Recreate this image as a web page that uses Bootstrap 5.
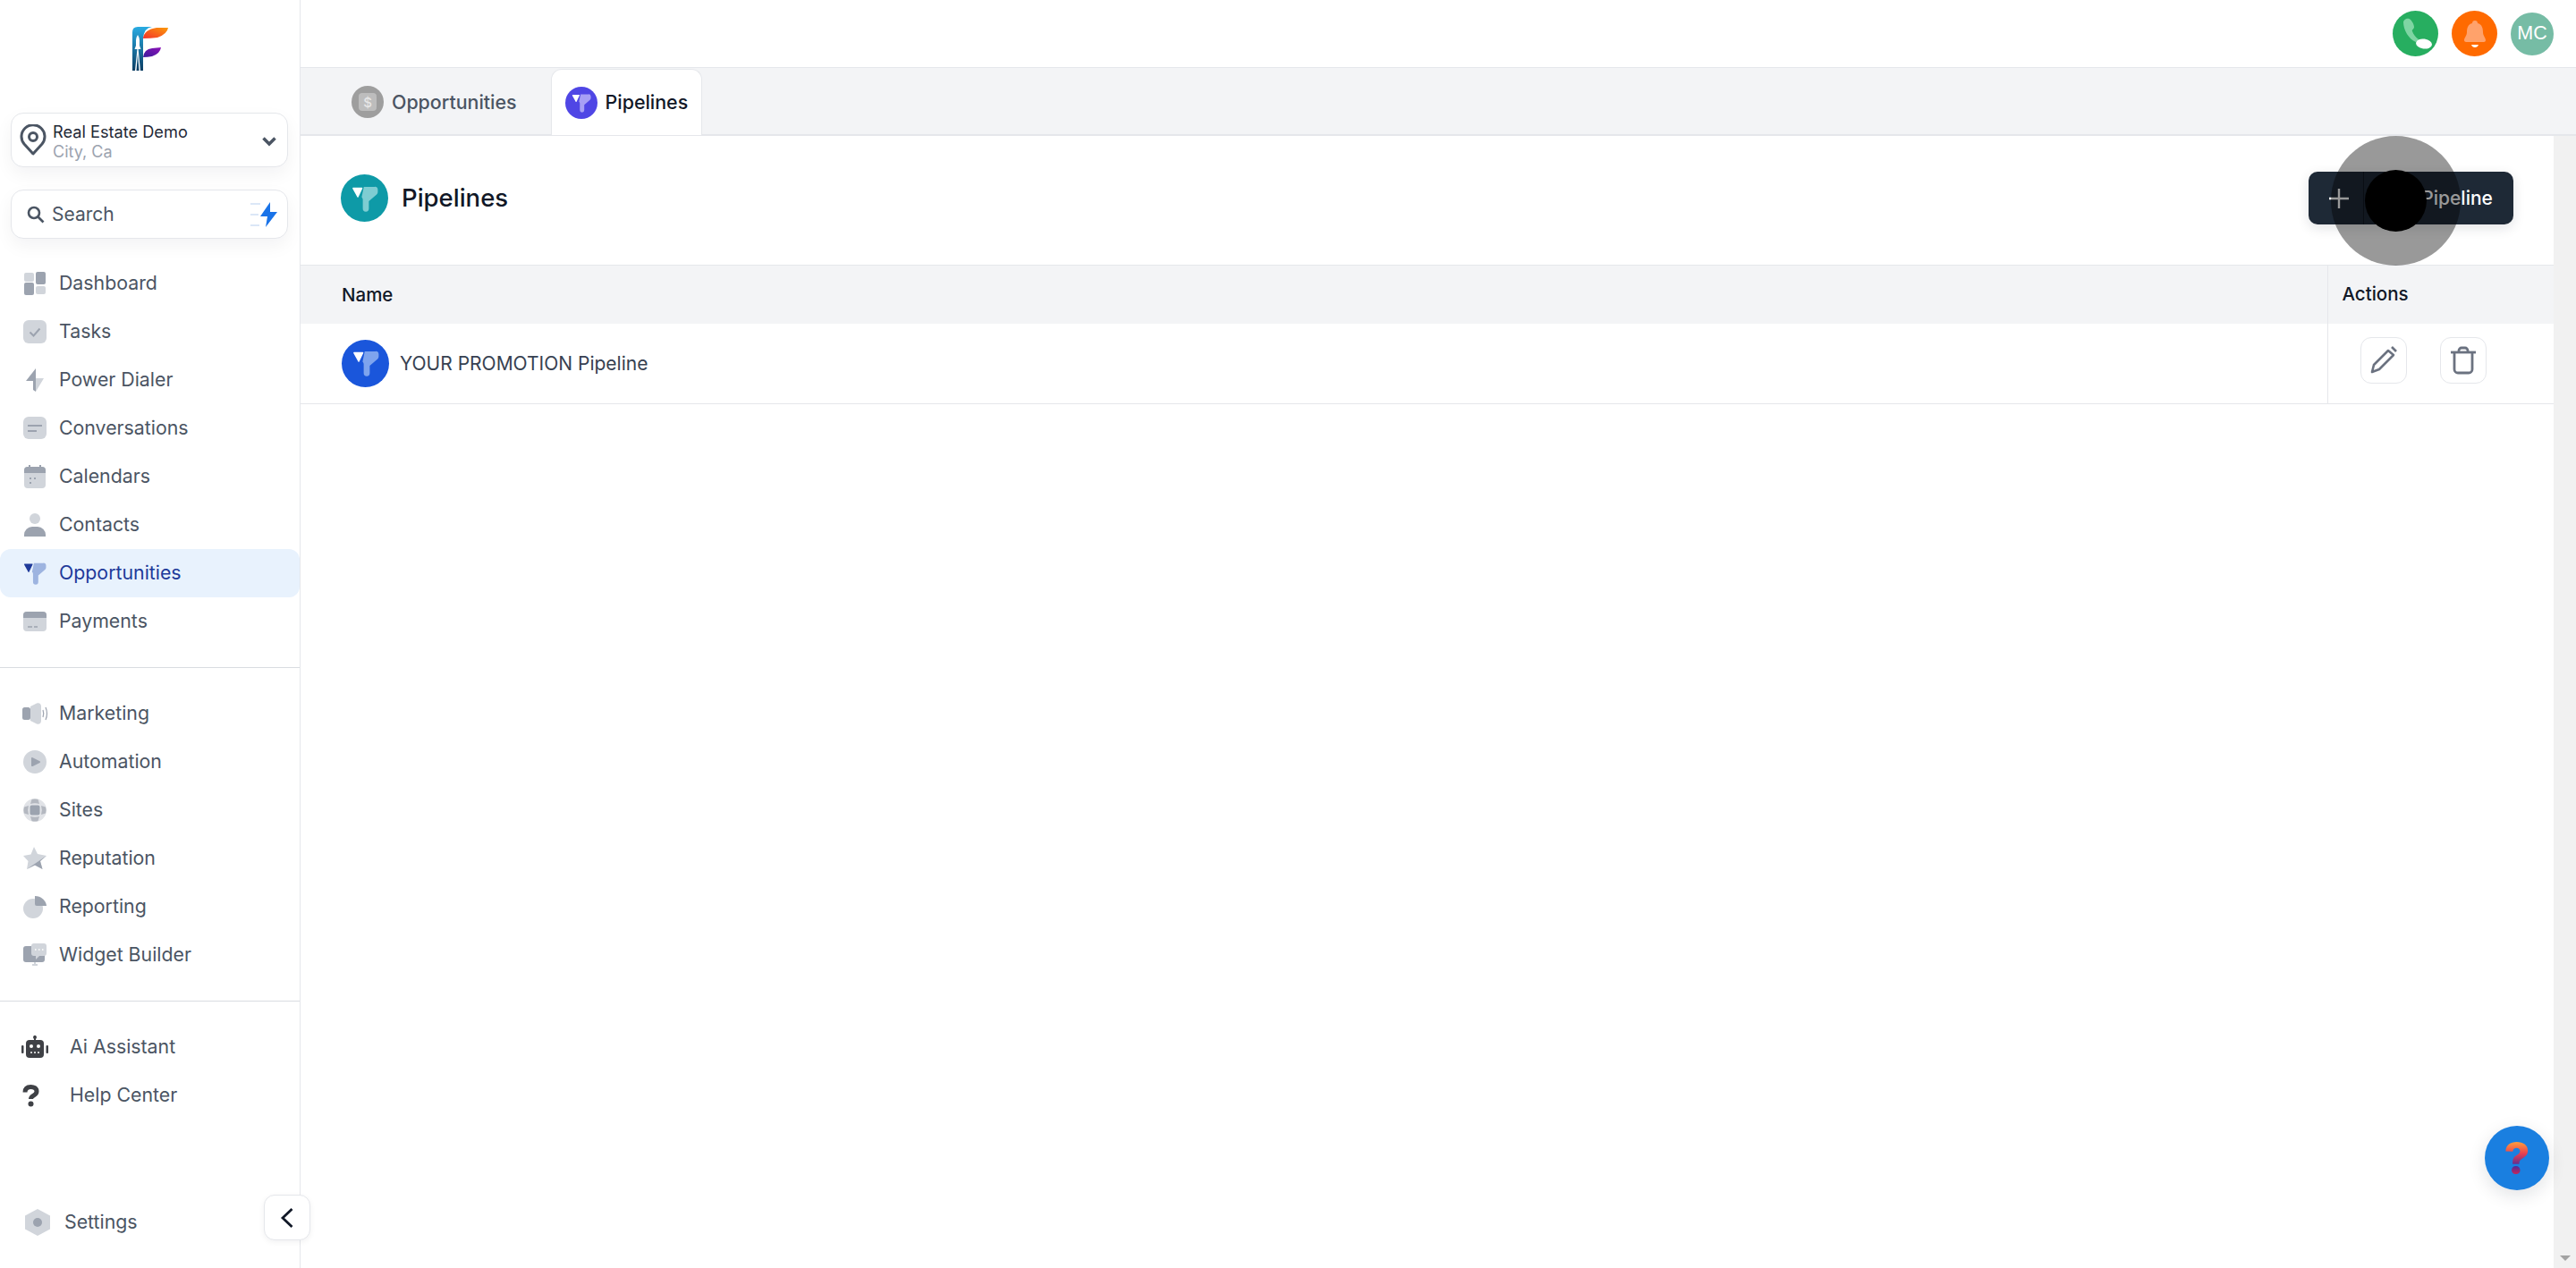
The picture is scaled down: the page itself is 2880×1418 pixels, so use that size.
<!DOCTYPE html>
<html lang="en">
<head>
    <meta charset="UTF-8">
    <meta name="viewport" content="width=device-width, initial-scale=1.0">
    <title>Pipelines</title>
    <link href="https://cdn.jsdelivr.net/npm/bootstrap@5.3.0/dist/css/bootstrap.min.css" rel="stylesheet">
    <style>
        html, body { height: 100%; overflow: hidden; }
        body { font-family: Inter, "Liberation Sans", sans-serif; color: #111827; background: #fff; font-size: 20px; }
        .app-shell { height: 1418px; }

        /* sidebar */
        .side-col { width: 336px; flex: 0 0 336px; border-right: 1px solid #e5e7eb; }
        .logo-wrap { height: 126px; padding-top: 30px; }
        .box-loc, .box-search { margin: 0 13px 0 12px; border: 1px solid #e5e7eb; border-radius: 14px; background: #fff; box-shadow: 0 8px 20px rgba(17, 24, 39, .05); }
        .box-loc { height: 61px; margin-bottom: 25px; padding: 2px 12px 0 9px; }
        .loc-pin { margin-right: 7px; margin-top: -2px; }
        .box-search { height: 55px; margin-bottom: 23px; padding: 0 10px 0 17px; color: #4b5563; font-size: 21px; }
        .loc-name { font-size: 18.2px; line-height: 24px; color: #1f2937; }
        .loc-sub { font-size: 18px; line-height: 22px; color: #9ca3af; }
        .nav-item-row { height: 54px; padding-left: 26px; color: #4b5563; font-size: 21.3px; text-decoration: none; border-radius: 0 12px 12px 0; }
        .nav-item-row svg { flex: 0 0 26px; margin-right: 14px; overflow: visible; }
        .nav-item-row.is-on { background: #e8f2fd; color: #1e3a9a; border-radius: 12px; }
        .nav-item-row.is-tool { padding-left: 24px; }
        .nav-item-row.is-tool svg { flex: 0 0 30px; margin-right: 24px; }
        .nav-item-row.is-set { padding-left: 28px; margin-bottom: 24px; }
        .nav-item-row.is-set svg { flex: 0 0 28px; margin-right: 16px; }
        .side-line { border-top: 1px solid #d9dce1; }
        .gap-top { margin-top: 24px; }
        .collapse-btn { position: absolute; left: 295px; top: 1336px; width: 52px; height: 51px; background: #fff; border: 1px solid #e5e7eb; border-radius: 12px; box-shadow: 0 2px 6px rgba(17, 24, 39, .06); z-index: 3; }

        /* top bar and tabs */
        .top-bar { height: 76px; border-bottom: 1px solid #e5e7eb; padding-right: 25px; }
        .round-btn { width: 51px; height: 51px; border-radius: 50%; margin-right: 15px; }
        .round-btn.is-green { background: #27ae60; }
        .round-btn.is-orange { background: #ff6a00; }
        .round-btn.is-user { width: 48px; height: 48px; margin-right: 0; background: #76bca5; color: #fff; font-family: "Liberation Sans", sans-serif; font-size: 21.5px; }
        .tab-bar { height: 76px; background: #f3f4f6; border-bottom: 2px solid #e5e7eb; padding-left: 42px; }
        .tab-item { height: 74px; margin-top: 1px; padding: 0 15px; font-size: 21.4px; font-weight: 500; color: #4b5563; }
        .tab-item.is-on { background: #fff; color: #111827; border: 1px solid #e5e7eb; border-bottom: 0; border-radius: 12px 12px 0 0; margin-left: 23px; }
        .tab-disc { margin-right: 9px; }

        /* content */
        .page-head { height: 144px; padding: 0 45px 5px 45px; }
        .page-title { font-size: 27.5px; font-weight: 500; color: #111827; margin: 0 0 0 15px; }
        .add-btn { position: relative; height: 59px; width: 229px; background: #1e2936; color: #fff; border: 0; border-radius: 10px; font-size: 21px; font-weight: 500; box-shadow: 0 4px 14px rgba(17, 24, 39, .12); }
        .add-plus { width: 62px; height: 100%; padding-left: 6px; border-right: 1px solid #111822; }
        .add-label { padding-left: 18px; }
        .pipe-table { margin: 0; border-top: 1px solid #e5e7eb; table-layout: fixed; }
        .pipe-table th { height: 65px; background: #f3f4f6; font-size: 20.5px; font-weight: 500; color: #111827; padding: 0 0 0 16px; vertical-align: middle; border-bottom: 0; }
        .pipe-table th:first-child { padding: 2px 0 0 46px; }
        .pipe-table td { height: 90px; font-size: 21px; color: #374151; padding: 0 0 0 46px; vertical-align: middle; border-bottom: 1px solid #e5e7eb; }
        .pipe-table th.col-act { width: 253px; border-left: 1px solid #e5e7eb; }
        .pipe-table td.col-act { border-left: 1px solid #e5e7eb; padding: 0 0 7px 36px; }
        .icon-box { width: 52px; height: 52px; padding: 0; background: #fff; border: 1px solid #e5e7eb; border-radius: 12px; margin-right: 37px; }
        .row-name { margin-left: 12px; }
        .fake-scroll { width: 25px; flex: 0 0 25px; background: #f1f1f1; padding-bottom: 8px; }
        .scroll-arrow { width: 0; height: 0; border-left: 6px solid transparent; border-right: 6px solid transparent; border-top: 6px solid #a3a3a3; }

        /* funnel tints */
        .fn-nav { color: #9db4e0; --tri: #1e3a9a; }
        .fn-tab { color: #a7a0f5; --tri: #fff; }
        .fn-teal { color: #7ecdd2; --tri: #fff; }
        .fn-blue { color: #7ea4ee; --tri: #fff; }
        .disc { border-radius: 50%; }
        .disc-tab { width: 36px; height: 36px; background: #4f46e5; }
        .disc-gray { width: 36px; height: 36px; background: #9e9e9e; }
        .disc-teal { width: 53px; height: 53px; background: #0e9aa7; }
        .disc-blue { width: 53px; height: 53px; background: #1a56db; }

        /* click marker over the button */
        .click-ring { position: absolute; left: 2606px; top: 152px; width: 145px; height: 145px; border-radius: 50%; background: rgba(0, 0, 0, .4); z-index: 4; }
        .click-dot { position: absolute; left: 2644px; top: 190px; width: 69px; height: 69px; border-radius: 50%; background: #000; z-index: 5; }
        .help-fab { position: absolute; left: 2778px; top: 1259px; width: 72px; height: 72px; border-radius: 50%; background: #1a7fe0; box-shadow: 0 6px 20px rgba(17, 24, 39, .12); z-index: 3; }
        .help-mark { font-size: 50px; font-weight: 800; line-height: 1; background: linear-gradient(180deg, #ff9a3c 15%, #e8404f 40%, #4b2a9a 68%, #c2255c 85%); -webkit-background-clip: text; background-clip: text; color: transparent; }
    </style>
</head>
<body>
    <!-- shared icons -->
    <svg width="0" height="0" class="position-absolute">
        <symbol id="funnel" viewBox="0 0 24 24">
            <path d="M1.600 2.200h7.600a.6.6 0 0 1 .5.9l-3.600 7.600a.5.5 0 0 1-.9.1L1 3.200a.7.7 0 0 1 .6-1z" fill="var(--tri)"/>
            <path d="M11 1.500h9.800A2.700 2.700 0 0 1 23.500 4v2.200a3 3 0 0 1-1 2.200l-7 6v6.600a2.700 2.700 0 0 1-5.400 0v-8.200a3 3 0 0 0-1-2.100L11 1.500z" fill="currentColor"/>
        </symbol>
    </svg>

    <div class="app-shell d-flex position-relative">
        <aside class="side-col d-flex flex-column">
            <div class="logo-wrap d-flex justify-content-center">
                <svg width="40" height="50" viewBox="0 0 40 50">
                    <defs>
                        <linearGradient id="logoBlue" x1="0" y1="0" x2="0" y2="1"><stop offset="0" stop-color="#29abe2"/><stop offset="1" stop-color="#0b3d63"/></linearGradient>
                        <linearGradient id="logoOrange" x1="0" y1="1" x2="1" y2="0"><stop offset="0" stop-color="#f4312a"/><stop offset="1" stop-color="#fb9a0a"/></linearGradient>
                        <linearGradient id="logoPurple" x1="0" y1="1" x2="1" y2="0"><stop offset="0" stop-color="#3a1a9a"/><stop offset="1" stop-color="#8e12b8"/></linearGradient>
                    </defs>
                    <path d="M0 49V6Q0 0 6 0H22Q13 1 12 13V49H0z" fill="url(#logoBlue)"/>
                    <path d="M12 13Q13 3 27 1H40Q39 8 28 12Q20 13 12 13z" fill="url(#logoOrange)"/>
                    <path d="M12 34Q13 25 22 24L32 23Q31 30 22 33Q17 34 12 34z" fill="url(#logoPurple)"/>
                    <path d="M6 9Q8 12 8 15V21L9.500 25H2.500L4 21V15Q4 12 6 9zM5.400 25L3 49H4.500L6 30L7.500 49H9L6.600 25z" fill="#fff"/>
                </svg>
            </div>

            <div class="box-loc d-flex align-items-center">
                <svg width="30" height="36" viewBox="0 0 30 36" fill="none" stroke="#4b5563" stroke-width="3" class="loc-pin">
                    <path d="M15 33L5 22A13 13 0 1 1 25 22z" stroke-linejoin="round"/>
                    <circle cx="15" cy="14" r="4.500"/>
                </svg>
                <div class="flex-grow-1">
                    <div class="loc-name">Real Estate Demo</div>
                    <div class="loc-sub">City, Ca</div>
                </div>
                <svg width="16" height="12" viewBox="0 0 16 12" fill="none" stroke="#4b5563" stroke-width="3.500"><path d="M1.500 2.500L8 9l6.500-6.500"/></svg>
            </div>

            <div class="box-search d-flex align-items-center">
                <svg width="20" height="20" viewBox="0 0 20 20" fill="none" stroke="#4b5563" stroke-width="2.600" class="me-2"><circle cx="8" cy="8" r="6"/><path d="M12.500 12.500L18.500 18.500"/></svg>
                <span class="flex-grow-1">Search</span>
                <svg width="32" height="28" viewBox="0 0 32 28">
                    <path d="M1 2h11M1 14h9M1 26h10" stroke="#dbe7f7" stroke-width="2"/>
                    <path d="M23 0L12 16h8l-2 12 13-17h-8z" fill="#1a73e8"/>
                </svg>
            </div>

            <nav class="d-flex flex-column">
                <a class="nav-item-row d-flex align-items-center" href="#">
                    <svg width="26" height="26" viewBox="0 0 26 26"><rect x="1" y="1" width="11" height="10" rx="2" fill="#d1d5db"/><rect x="14" y="0" width="11" height="14" rx="2" fill="#9ca3af"/><rect x="1" y="12" width="11" height="14" rx="2" fill="#9ca3af"/><rect x="14" y="16" width="11" height="9" rx="2" fill="#d1d5db"/></svg>
                    Dashboard
                </a>
                <a class="nav-item-row d-flex align-items-center" href="#">
                    <svg width="26" height="26" viewBox="0 0 26 26"><rect x="0" y="0" width="26" height="26" rx="6" fill="#d1d5db"/><path d="M7.500 13.500l4 4 7-8" fill="none" stroke="#9ca3af" stroke-width="2"/></svg>
                    Tasks
                </a>
                <a class="nav-item-row d-flex align-items-center" href="#">
                    <svg width="26" height="26" viewBox="0 0 26 26"><path d="M14 0L3 14h11z" fill="#9ca3af"/><path d="M14 0v11h9L14 26z" fill="#d1d5db"/><path d="M11 14h3v12l-3-2z" fill="#9ca3af"/></svg>
                    Power Dialer
                </a>
                <a class="nav-item-row d-flex align-items-center" href="#">
                    <svg width="26" height="26" viewBox="0 0 26 26"><rect x="0" y="0" width="26" height="25" rx="6" fill="#d1d5db"/><path d="M5 10h16M5 16h10" stroke="#9ca3af" stroke-width="2"/></svg>
                    Conversations
                </a>
                <a class="nav-item-row d-flex align-items-center" href="#">
                    <svg width="26" height="26" viewBox="0 0 26 26"><rect x="1" y="2" width="24" height="24" rx="4" fill="#d1d5db"/><path d="M1 9V6a4 4 0 0 1 4-4h16a4 4 0 0 1 4 4v3z" fill="#9ca3af"/><path d="M7 0v3M19 0v3" stroke="#9ca3af" stroke-width="2"/><path d="M7 15h2M12 15h2M7 20h2" stroke="#9ca3af" stroke-width="2"/></svg>
                    Calendars
                </a>
                <a class="nav-item-row d-flex align-items-center" href="#">
                    <svg width="26" height="26" viewBox="0 0 26 26"><circle cx="13" cy="6" r="6" fill="#d1d5db"/><path d="M1 26v-2a9 9 0 0 1 9-9h6a9 9 0 0 1 9 9v2z" fill="#9ca3af"/></svg>
                    Contacts
                </a>
                <a class="nav-item-row is-on d-flex align-items-center" href="#">
                    <svg width="26" height="26" viewBox="0 0 24 24" class="fn-nav"><use href="#funnel"/></svg>
                    Opportunities
                </a>
                <a class="nav-item-row d-flex align-items-center" href="#">
                    <svg width="26" height="26" viewBox="0 0 26 26"><rect x="0" y="2" width="26" height="22" rx="4" fill="#d1d5db"/><path d="M0 9V6a4 4 0 0 1 4-4h18a4 4 0 0 1 4 4v3z" fill="#9ca3af"/><path d="M5 19h5M12 19h4" stroke="#9ca3af" stroke-width="1.500"/></svg>
                    Payments
                </a>
            </nav>

            <div class="side-line gap-top"></div>

            <nav class="d-flex flex-column gap-top">
                <a class="nav-item-row d-flex align-items-center" href="#">
                    <svg width="26" height="26" viewBox="0 0 26 26"><rect x="-1" y="6" width="9" height="14" rx="2.500" fill="#9ca3af"/><path d="M8 5l7-3.500c3-1 5 .5 5 3.500v16c0 3-2 4.500-5 3.500L8 21z" fill="#d1d5db"/><path d="M22 9q1.500 4 0 8M25 6q3 7 0 14" fill="none" stroke="#9ca3af" stroke-width="1.200"/></svg>
                    Marketing
                </a>
                <a class="nav-item-row d-flex align-items-center" href="#">
                    <svg width="26" height="26" viewBox="0 0 26 26"><circle cx="13" cy="13" r="13" fill="#d1d5db"/><path d="M9 9a1 1 0 0 1 1.500-.8l8 4a1 1 0 0 1 0 1.700l-8 4A1 1 0 0 1 9 17z" fill="#9ca3af"/></svg>
                    Automation
                </a>
                <a class="nav-item-row d-flex align-items-center" href="#">
                    <svg width="26" height="26" viewBox="0 0 26 26"><circle cx="13" cy="13" r="13" fill="#e1e3e7"/><rect x="7.500" y="7.500" width="11" height="11" rx="2" fill="#9ca3af"/><path d="M8 6q5-1.500 10 0L16.500 1q-3.500-1.200-7 0zM8 20q5 1.500 10 0l-1.500 5q-3.500 1.200-7 0zM6 8q-1.500 5 0 10L1 16.500q-1.200-3.500 0-7zM20 8q1.500 5 0 10l5-1.500q1.200-3.500 0-7z" fill="#b4b8c0"/></svg>
                    Sites
                </a>
                <a class="nav-item-row d-flex align-items-center" href="#">
                    <svg width="26" height="26" viewBox="0 0 26 26"><path d="M12 0l4 8 10 2-7 6 2.500 9-8.500-4.500L4 25l1.500-9L0 10l8.500-1.500z" fill="#d1d5db"/><path d="M26 10l-7 6 2.500 9-8.500-4.500L4 25z" fill="#9ca3af"/></svg>
                    Reputation
                </a>
                <a class="nav-item-row d-flex align-items-center" href="#">
                    <svg width="26" height="26" viewBox="0 0 26 26"><circle cx="11" cy="15" r="11" fill="#d1d5db"/><path d="M13 1a13 12 0 0 1 13 11H15a2 2 0 0 1-2-2z" fill="#9ca3af"/></svg>
                    Reporting
                </a>
                <a class="nav-item-row d-flex align-items-center" href="#">
                    <svg width="26" height="26" viewBox="0 0 26 26"><rect x="0" y="3" width="24" height="18" rx="3" fill="#9ca3af"/><path d="M10 24h6M13 21v3" stroke="#d1d5db" stroke-width="2"/><path d="M12 0h11a3 3 0 0 1 3 3v8a3 3 0 0 1-3 3h-5l-4 4v-4h-2a3 3 0 0 1-3-3V3a3 3 0 0 1 3-3z" fill="#d1d5db"/><path d="M13 7h1.500M17 7h1.500M21 7h1.500" stroke="#fff" stroke-width="1.500"/></svg>
                    Widget Builder
                </a>
            </nav>

            <div class="side-line gap-top"></div>

            <nav class="d-flex flex-column gap-top">
                <a class="nav-item-row is-tool d-flex align-items-center" href="#">
                    <svg width="30" height="26" viewBox="0 0 30 26"><path d="M15 0v5" stroke="#3f4146" stroke-width="2"/><circle cx="15" cy="2" r="2" fill="#3f4146"/><rect x="5" y="5" width="20" height="20" rx="4" fill="#3f4146"/><rect x="0" y="11" width="2.500" height="9" rx="1" fill="#3f4146"/><rect x="27.500" y="11" width="2.500" height="9" rx="1" fill="#3f4146"/><circle cx="11" cy="12" r="2" fill="#fff"/><circle cx="19" cy="12" r="2" fill="#fff"/><path d="M10 19h2M14 19h2M18 19h2" stroke="#fff" stroke-width="1.500"/></svg>
                    Ai Assistant
                </a>
                <a class="nav-item-row is-tool d-flex align-items-center" href="#">
                    <svg width="30" height="26" viewBox="0 0 30 26" fill="none"><path d="M4 9.500C4 5 7 3.500 10.500 3.500S17 5 17 8.500c0 5-6.500 4.200-6.500 8.500" stroke="#3f4146" stroke-width="5"/><circle cx="10.500" cy="22.500" r="3" fill="#3f4146"/></svg>
                    Help Center
                </a>
            </nav>

            <a class="nav-item-row is-set d-flex align-items-center mt-auto" href="#">
                <svg width="28" height="30" viewBox="0 0 28 30"><path d="M14 0l14 7.500v15L14 30 0 22.500v-15z" fill="#d1d5db"/><circle cx="14" cy="15" r="5" fill="#9ca3af"/></svg>
                Settings
            </a>
        </aside>

        <button class="collapse-btn d-flex align-items-center justify-content-center" aria-label="Collapse">
            <svg width="16" height="24" viewBox="0 0 16 24" fill="none" stroke="#111827" stroke-width="2.800"><path d="M13.500 2L3 12l10.500 10"/></svg>
        </button>

        <div class="flex-grow-1 d-flex flex-column min-w-0">
            <header class="top-bar d-flex align-items-center justify-content-end">
                <div class="round-btn is-green d-flex align-items-center justify-content-center">
                    <svg width="36" height="38" viewBox="0 0 36 38">
                        <path d="M4 6c0-3 5-6 8-3 3 3 4 7 4 8 0 3-3 3-2 5 1 3 4 7 7 9l-3 3C10 25 4 14 4 6z" fill="#7fd5a3"/>
                        <ellipse cx="27" cy="30" rx="9" ry="5.500" fill="#fff" transform="rotate(8 27 30)"/>
                    </svg>
                </div>
                <div class="round-btn is-orange d-flex align-items-center justify-content-center">
                    <svg width="26" height="32" viewBox="0 0 26 32">
                        <path d="M13 1a3 3 0 0 1 3 3c5 1 6 6 6 10 0 4 3 6 3 9 0 1-1 2-2 2H3c-1 0-2-1-2-2 0-3 3-5 3-9 0-4 1-9 6-10a3 3 0 0 1 3-3z" fill="#ffa26b"/>
                        <path d="M9 28h8q-1 3-4 3t-4-3z" fill="#fff"/>
                    </svg>
                </div>
                <div class="round-btn is-user d-flex align-items-center justify-content-center">MC</div>
            </header>

            <div class="tab-bar d-flex align-items-stretch">
                <div class="tab-item d-flex align-items-center">
                    <span class="disc disc-gray tab-disc d-flex align-items-center justify-content-center">
                        <svg width="20" height="20" viewBox="0 0 20 20"><rect width="20" height="20" rx="4" fill="#bdbdbd"/><text x="10" y="15.500" text-anchor="middle" font-size="15" fill="#e6e6e6">$</text></svg>
                    </span>
                    Opportunities
                </div>
                <div class="tab-item is-on d-flex align-items-center">
                    <span class="disc disc-tab tab-disc d-flex align-items-center justify-content-center">
                        <svg width="22" height="24" viewBox="0 0 24 24" class="fn-tab"><use href="#funnel"/></svg>
                    </span>
                    Pipelines
                </div>
            </div>

            <div class="flex-grow-1 d-flex min-h-0">
                <main class="flex-grow-1 min-w-0">
                    <div class="page-head d-flex align-items-center justify-content-between">
                        <div class="d-flex align-items-center">
                            <span class="disc disc-teal d-flex align-items-center justify-content-center">
                                <svg width="30" height="32" viewBox="0 0 24 24" class="fn-teal"><use href="#funnel"/></svg>
                            </span>
                            <h1 class="page-title">Pipelines</h1>
                        </div>
                        <button class="add-btn d-flex align-items-center p-0">
                            <span class="add-plus d-flex align-items-center justify-content-center">
                                <svg width="22" height="22" viewBox="0 0 22 22" stroke="#fff" stroke-width="2.400"><path d="M11 0v22M0 11h22"/></svg>
                            </span>
                            <span class="add-label">Add Pipeline</span>
                        </button>
                    </div>

                    <table class="table pipe-table">
                        <thead>
                            <tr>
                                <th>Name</th>
                                <th class="col-act">Actions</th>
                            </tr>
                        </thead>
                        <tbody>
                            <tr>
                                <td>
                                    <div class="d-flex align-items-center">
                                        <span class="disc disc-blue d-flex align-items-center justify-content-center">
                                            <svg width="30" height="32" viewBox="0 0 24 24" class="fn-blue"><use href="#funnel"/></svg>
                                        </span>
                                        <span class="row-name">YOUR PROMOTION Pipeline</span>
                                    </div>
                                </td>
                                <td class="col-act">
                                    <div class="d-flex align-items-center">
                                        <button class="icon-box d-flex align-items-center justify-content-center" aria-label="Edit">
                                            <svg width="32" height="32" viewBox="0 0 32 32" fill="none" stroke="#6b7280" stroke-width="2.600" stroke-linejoin="round"><path d="M3 29l2-8L21 5l6 5-16 16z"/><path d="M25 1l5 5"/></svg>
                                        </button>
                                        <button class="icon-box d-flex align-items-center justify-content-center" aria-label="Delete">
                                            <svg width="30" height="32" viewBox="0 0 30 32" fill="none" stroke="#6b7280" stroke-width="2.800"><path d="M1 7h28"/><path d="M10 7V5a3 3 0 0 1 3-3h4a3 3 0 0 1 3 3v2"/><path d="M5 7v19a4 4 0 0 0 4 4h12a4 4 0 0 0 4-4V7"/></svg>
                                        </button>
                                    </div>
                                </td>
                            </tr>
                        </tbody>
                    </table>
                </main>
                <div class="fake-scroll d-flex align-items-end justify-content-center">
                    <div class="scroll-arrow"></div>
                </div>
            </div>
        </div>

        <div class="click-ring"></div>
        <div class="click-dot"></div>
        <div class="help-fab d-flex align-items-center justify-content-center"><span class="help-mark">?</span></div>
    </div>

    <script src="https://cdn.jsdelivr.net/npm/bootstrap@5.3.0/dist/js/bootstrap.bundle.min.js"></script>
</body>
</html>
